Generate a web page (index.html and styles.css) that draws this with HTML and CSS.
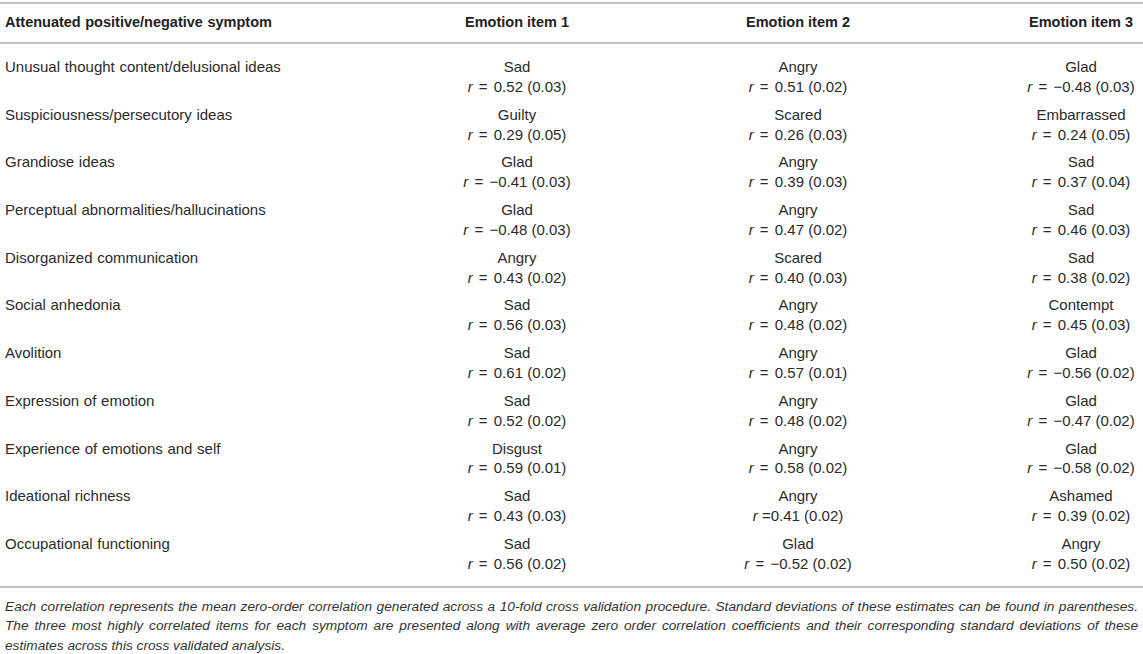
FILE: index.html
```html
<!DOCTYPE html>
<html lang="en">

<head>
    <meta charset="UTF-8">
    <meta name="viewport" content="width=device-width, initial-scale=1.0">
    <title>Emotion items by symptom</title>
    <link rel="stylesheet" href="styles.css">
</head>

<body>
    <table class="tbl">
        <colgroup>
            <col class="c-symptom">
            <col class="c-item1">
            <col class="c-item2">
            <col class="c-item3">
        </colgroup>
        <thead>
            <tr>
                <th class="sym">Attenuated positive/negative symptom</th>
                <th>Emotion item 1</th>
                <th>Emotion item 2</th>
                <th>Emotion item 3</th>
            </tr>
        </thead>
        <tbody>
            <tr>
                <td class="sym">Unusual thought content/delusional ideas</td>
                <td>Sad<br><i>r</i> <span class="eq">=</span> 0.52 (0.03)</td>
                <td>Angry<br><i>r</i> <span class="eq">=</span> 0.51 (0.02)</td>
                <td>Glad<br><i>r</i> <span class="eq">=</span> &minus;0.48 (0.03)</td>
            </tr>
            <tr>
                <td class="sym">Suspiciousness/persecutory ideas</td>
                <td>Guilty<br><i>r</i> <span class="eq">=</span> 0.29 (0.05)</td>
                <td>Scared<br><i>r</i> <span class="eq">=</span> 0.26 (0.03)</td>
                <td>Embarrassed<br><i>r</i> <span class="eq">=</span> 0.24 (0.05)</td>
            </tr>
            <tr>
                <td class="sym">Grandiose ideas</td>
                <td>Glad<br><i>r</i> <span class="eq">=</span> &minus;0.41 (0.03)</td>
                <td>Angry<br><i>r</i> <span class="eq">=</span> 0.39 (0.03)</td>
                <td>Sad<br><i>r</i> <span class="eq">=</span> 0.37 (0.04)</td>
            </tr>
            <tr>
                <td class="sym">Perceptual abnormalities/hallucinations</td>
                <td>Glad<br><i>r</i> <span class="eq">=</span> &minus;0.48 (0.03)</td>
                <td>Angry<br><i>r</i> <span class="eq">=</span> 0.47 (0.02)</td>
                <td>Sad<br><i>r</i> <span class="eq">=</span> 0.46 (0.03)</td>
            </tr>
            <tr>
                <td class="sym">Disorganized communication</td>
                <td>Angry<br><i>r</i> <span class="eq">=</span> 0.43 (0.02)</td>
                <td>Scared<br><i>r</i> <span class="eq">=</span> 0.40 (0.03)</td>
                <td>Sad<br><i>r</i> <span class="eq">=</span> 0.38 (0.02)</td>
            </tr>
            <tr>
                <td class="sym">Social anhedonia</td>
                <td>Sad<br><i>r</i> <span class="eq">=</span> 0.56 (0.03)</td>
                <td>Angry<br><i>r</i> <span class="eq">=</span> 0.48 (0.02)</td>
                <td>Contempt<br><i>r</i> <span class="eq">=</span> 0.45 (0.03)</td>
            </tr>
            <tr>
                <td class="sym">Avolition</td>
                <td>Sad<br><i>r</i> <span class="eq">=</span> 0.61 (0.02)</td>
                <td>Angry<br><i>r</i> <span class="eq">=</span> 0.57 (0.01)</td>
                <td>Glad<br><i>r</i> <span class="eq">=</span> &minus;0.56 (0.02)</td>
            </tr>
            <tr>
                <td class="sym">Expression of emotion</td>
                <td>Sad<br><i>r</i> <span class="eq">=</span> 0.52 (0.02)</td>
                <td>Angry<br><i>r</i> <span class="eq">=</span> 0.48 (0.02)</td>
                <td>Glad<br><i>r</i> <span class="eq">=</span> &minus;0.47 (0.02)</td>
            </tr>
            <tr>
                <td class="sym">Experience of emotions and self</td>
                <td>Disgust<br><i>r</i> <span class="eq">=</span> 0.59 (0.01)</td>
                <td>Angry<br><i>r</i> <span class="eq">=</span> 0.58 (0.02)</td>
                <td>Glad<br><i>r</i> <span class="eq">=</span> &minus;0.58 (0.02)</td>
            </tr>
            <tr>
                <td class="sym">Ideational richness</td>
                <td>Sad<br><i>r</i> <span class="eq">=</span> 0.43 (0.03)</td>
                <td>Angry<br><i>r</i> =0.41 (0.02)</td>
                <td>Ashamed<br><i>r</i> <span class="eq">=</span> 0.39 (0.02)</td>
            </tr>
            <tr>
                <td class="sym">Occupational functioning</td>
                <td>Sad<br><i>r</i> <span class="eq">=</span> 0.56 (0.02)</td>
                <td>Glad<br><i>r</i> <span class="eq">=</span> &minus;0.52 (0.02)</td>
                <td>Angry<br><i>r</i> <span class="eq">=</span> 0.50 (0.02)</td>
            </tr>
        </tbody>
    </table>
    <p class="note">Each correlation represents the mean zero-order correlation generated across a 10-fold cross validation procedure. Standard deviations of these estimates can be found in parentheses. The three most highly correlated items for each symptom are presented along with average zero order correlation coefficients and their corresponding standard deviations of these estimates across this cross validated analysis.</p>
</body>

</html>
```
FILE: styles.css
```css
* {
    padding: 0;
    margin: 0;
}

body {
    background-color: #fff;
    color: #2b2b2b;
    font-family: "Liberation Sans", Arial, sans-serif;
    font-size: 15px;
}

.tbl {
    width: 1143px;
    margin-top: 2px;
    border-collapse: collapse;
    table-layout: fixed;
    border-top: 2px solid #c2c2c2;
    border-bottom: 2px solid #c2c2c2;
}

.c-symptom {
    width: 457px;
}

.c-item1 {
    width: 120px;
}

.c-item2 {
    width: 442px;
}

.c-item3 {
    width: 124px;
}

.tbl th {
    font-size: 14.5px;
    font-weight: bold;
    line-height: 20px;
    padding: 8px 5px 10px 5px;
    text-align: center;
    border-bottom: 2px solid #c2c2c2;
    color: #222;
}

.tbl td {
    line-height: 19.85px;
    padding: 4px 5px;
    text-align: center;
    vertical-align: top;
    white-space: nowrap;
}

.tbl .sym {
    text-align: left;
    word-spacing: 0.5px;
}

.tbl tbody tr:first-child td {
    padding-top: 13px;
}

.tbl tbody tr:last-child td {
    padding-bottom: 12px;
}

.tbl i {
    font-style: italic;
}

.eq {
    margin: 0 2px;
}

.note {
    font-size: 13.7px;
    font-style: italic;
    line-height: 19.5px;
    padding: 9px 5px 0 5px;
    text-align: justify;
    color: #333;
}
```
